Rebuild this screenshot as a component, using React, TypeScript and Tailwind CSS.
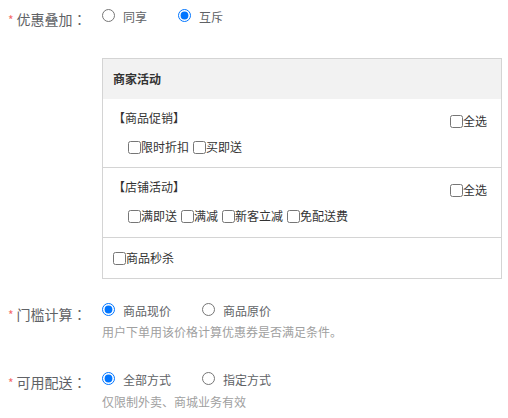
import React from "react";

const FONT = "font-['Microsoft_YaHei','Noto_Sans_CJK_SC','Noto_Sans',sans-serif]";

function Label({ text, className = "" }: { text: string; className?: string }) {
  return (
    <div className={`w-[102px] shrink-0 pl-[8px] text-[14px] leading-[20px] text-[#606266] flex items-center ${className}`}>
      <span className="text-[#f56c6c] text-[12px] mr-[3px] relative top-[1px]">*</span>
      <span>{text}</span>
      <span className="font-['Noto_Sans_CJK_TC',sans-serif]">：</span>
    </div>
  );
}

function Radio({ label, checked, name, gapAfter = true }: { label: string; checked?: boolean; name: string; gapAfter?: boolean }) {
  return (
    <label className={`flex items-center h-[13px] ${gapAfter ? "mr-[31px]" : ""}`}>
      <input type="radio" name={name} defaultChecked={checked} className="m-0 w-[13px] h-[13px]" />
      <span className="ml-[8px] text-[12px] leading-[13px] text-[#606266] relative top-[1px]">{label}</span>
    </label>
  );
}

function Check({ label, className = "" }: { label: string; className?: string }) {
  return (
    <label className={`flex items-center h-[20px] ${className}`}>
      <input type="checkbox" className="m-0 w-[13px] h-[13px]" />
      <span className="text-[12px] leading-[20px] text-[#333]">{label}</span>
    </label>
  );
}

function Section({ title, items, last }: { title: string; items: string[]; last?: boolean }) {
  return (
    <div className={`px-[10px] pt-[9px] ${last ? "pb-[11px]" : "pb-[10px]"} border-b border-[#d4d4d4]`}>
      <div className="flex justify-between items-start h-[20px]">
        <div className="text-[12px] leading-[20px] text-[#333]">{title}</div>
        <Check label="全选" className="mt-[3px] mr-[4px]" />
      </div>
      <div className="flex items-center gap-[4px] pl-[15px] mt-[9px] h-[20px]">
        {items.map((it) => (
          <Check key={it} label={it} />
        ))}
      </div>
    </div>
  );
}

export default function App() {
  return (
    <div className={`w-[508px] h-[418px] bg-white overflow-hidden ${FONT}`}>
      {/* 优惠叠加 */}
      <div className="flex items-start pt-[9px]">
        <Label text="优惠叠加" />
        <div className="flex flex-col">
          <div className="flex items-center">
            <Radio name="stack" label="同享" />
            <Radio name="stack" label="互斥" checked gapAfter={false} />
          </div>
          <div className="mt-[36px] w-[400px] border border-[#d4d4d4]">
            <div className="h-[40px] flex items-center px-[10px] bg-[#f2f2f2] text-[12px] font-bold text-[#333]">
              商家活动
            </div>
            <Section title="【商品促销】" items={["限时折扣", "买即送"]} />
            <Section title="【店铺活动】" items={["满即送", "满减", "新客立减", "免配送费"]} last />
            <div className="h-[40px] flex items-center px-[10px]">
              <Check label="商品秒杀" />
            </div>
          </div>
        </div>
      </div>

      {/* 门槛计算 */}
      <div className="flex items-start mt-[24px]">
        <Label text="门槛计算" className="pt-[1px]" />
        <div className="flex flex-col">
          <div className="flex items-center">
            <Radio name="threshold" label="商品现价" checked />
            <Radio name="threshold" label="商品原价" gapAfter={false} />
          </div>
          <div className="mt-[8px] text-[12px] leading-[16px] text-[#a0a0a0]">
            用户下单用该价格计算优惠券是否满足条件。
          </div>
        </div>
      </div>

      {/* 可用配送 */}
      <div className="flex items-start mt-[32px]">
        <Label text="可用配送" />
        <div className="flex flex-col">
          <div className="flex items-center">
            <Radio name="delivery" label="全部方式" checked />
            <Radio name="delivery" label="指定方式" gapAfter={false} />
          </div>
          <div className="mt-[9px] text-[12px] leading-[16px] text-[#a0a0a0]">
            仅限制外卖、商城业务有效
          </div>
        </div>
      </div>
    </div>
  );
}
